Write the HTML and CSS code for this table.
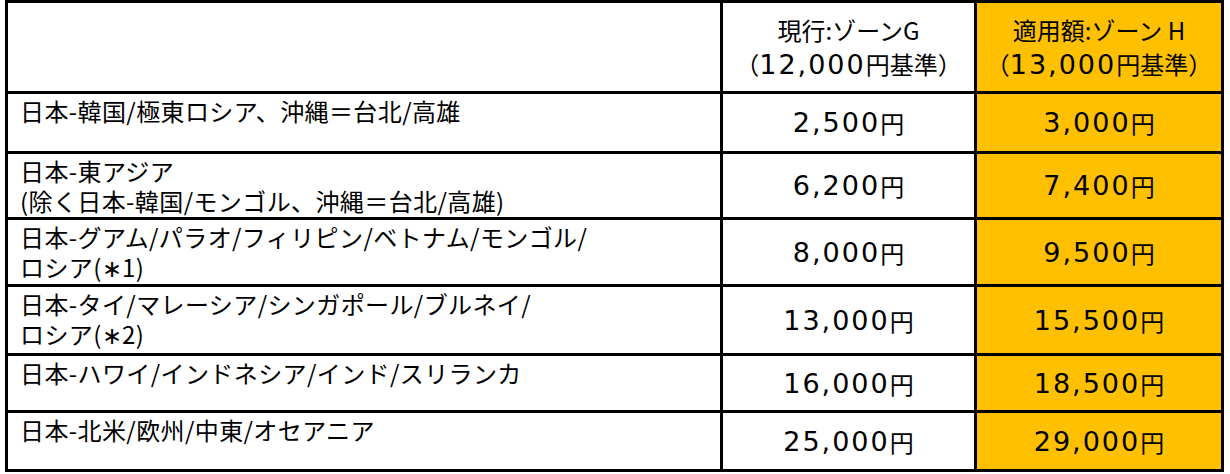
FILE: index.html
```html
<!DOCTYPE html>
<html lang="ja">
<head>
<meta charset="utf-8">
<title>燃油特別付加運賃</title>
<link rel="stylesheet" href="styles.css">
</head>
<body>
<div class="fare-table">
  <div class="cell route"></div>
  <div class="cell value head"><div><span class="jp">現行:ゾーンG</span><br><span class="jp">（</span>12,000<span class="jp">円基準）</span></div></div>
  <div class="cell value head gold"><div><span class="jp">適用額:ゾーン H</span><br><span class="jp">（</span>13,000<span class="jp">円基準）</span></div></div>

  <div class="cell route">日本-韓国/極東ロシア、沖縄＝台北/高雄</div>
  <div class="cell value">2,500<span class="jp">円</span></div>
  <div class="cell value gold">3,000<span class="jp">円</span></div>

  <div class="cell route">日本-東アジア<br>(除く日本-韓国/モンゴル、沖縄＝台北/高雄)</div>
  <div class="cell value">6,200<span class="jp">円</span></div>
  <div class="cell value gold">7,400<span class="jp">円</span></div>

  <div class="cell route">日本-グアム/パラオ/フィリピン/ベトナム/モンゴル/<br>ロシア(∗1)</div>
  <div class="cell value">8,000<span class="jp">円</span></div>
  <div class="cell value gold">9,500<span class="jp">円</span></div>

  <div class="cell route">日本-タイ/マレーシア/シンガポール/ブルネイ/<br>ロシア(∗2)</div>
  <div class="cell value">13,000<span class="jp">円</span></div>
  <div class="cell value gold">15,500<span class="jp">円</span></div>

  <div class="cell route">日本-ハワイ/インドネシア/インド/スリランカ</div>
  <div class="cell value">16,000<span class="jp">円</span></div>
  <div class="cell value gold">18,500<span class="jp">円</span></div>

  <div class="cell route">日本-北米/欧州/中東/オセアニア</div>
  <div class="cell value">25,000<span class="jp">円</span></div>
  <div class="cell value gold">29,000<span class="jp">円</span></div>
</div>
</body>
</html>
```

FILE: styles.css
```css
html, body {
  margin: 0;
  padding: 0;
  background: #ffffff;
}

body {
  font-family: "Noto Sans CJK JP", sans-serif;
  color: #000000;
}

.fare-table {
  margin-left: 5px;
  width: 1219px;
  box-sizing: border-box;
  display: grid;
  grid-template-columns: 712px 251px 244px;
  grid-template-rows: 88px 57px 63px 64px 66px 54px 56px;
  gap: 3px;
  padding: 3px;
  background: #000000;
}

.cell {
  background: #ffffff;
  overflow: hidden;
}

.gold {
  background: #ffc000;
}

.route {
  font-family: "Noto Sans CJK JP", sans-serif;
  font-size: 24px;
  letter-spacing: 0.4px;
  line-height: 30px;
  padding: 2px 12px 0;
  white-space: nowrap;
}

.value {
  display: flex;
  align-items: center;
  justify-content: center;
  text-align: center;
  font-family: "DejaVu Sans", "Noto Sans CJK JP", sans-serif;
  font-size: 27px;
  letter-spacing: 2px;
  white-space: nowrap;
}

.head {
  line-height: 33px;
}

.jp {
  font-family: "Noto Sans CJK JP", sans-serif;
  font-size: 24px;
  letter-spacing: 0;
}
```
